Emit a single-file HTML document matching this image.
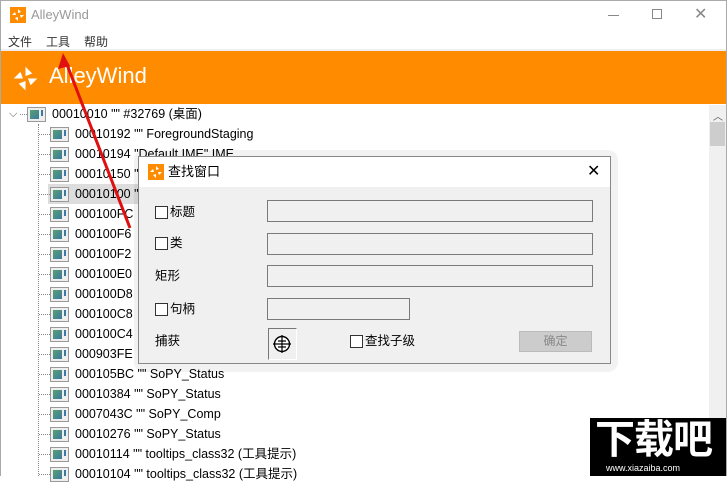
<!DOCTYPE html>
<html><head><meta charset="utf-8"><style>
*{margin:0;padding:0;box-sizing:border-box}
body{width:727px;height:476px;overflow:hidden;background:#fff;font-family:"Liberation Sans","Noto Sans CJK SC",sans-serif;font-size:12px;color:#000;position:relative}
.abs{position:absolute}
.row{position:absolute;left:0;height:20px;line-height:20px;white-space:nowrap;font-size:12.5px}
.ico{position:absolute;top:3px;width:19px;height:15px;border:1px solid #999;background:#eee;}
.ico:before{content:"";position:absolute;left:2px;top:2px;width:9px;height:9px;background:linear-gradient(135deg,#5aa070,#3a7aa0)}
.ico:after{content:"";position:absolute;right:2px;top:2px;width:2px;height:6px;background:#3a7aa0}
.hd{position:absolute;border-top:1px dotted #888;width:12px;top:10px}
.inp{position:absolute;background:#f0f0f0;border:1px solid #7a7a7a;height:22px}
.cb{position:absolute;width:13px;height:13px;border:1px solid #333;background:#fff}
.lbl{position:absolute;font-size:12.5px;line-height:14px}
</style></head><body>
<div class="abs" style="left:0;top:0;width:727px;height:476px;border:1px solid #aaa;border-bottom:none;pointer-events:none;z-index:9"></div>
<div class="abs" style="left:10px;top:7px;width:16px;height:16px;background:#ff8c00"></div>
<svg class="abs" style="left:10px;top:7px" width="16" height="16" viewBox="0 0 16 16"><path d="M8 2l3 3-3 1zM14 8l-3 3-1-3zM8 14l-3-3 3-1zM2 8l3-3 1 3z" fill="#fff"/></svg>
<div class="abs" style="left:31px;top:7px;font-size:13px;color:#999">AlleyWind</div>
<div class="abs" style="left:608px;top:15px;width:11px;height:1px;background:#888"></div>
<div class="abs" style="left:652px;top:9px;width:10px;height:10px;border:1px solid #888"></div>
<div class="abs" style="left:694px;top:4px;font-size:16px;color:#888">✕</div>
<div class="abs" style="left:8px;top:33px;font-size:12px;color:#333">文件</div>
<div class="abs" style="left:46px;top:33px;font-size:12px;color:#333">工具</div>
<div class="abs" style="left:84px;top:33px;font-size:12px;color:#333">帮助</div>
<div class="abs" style="left:0;top:49px;width:727px;height:2px;background:#eee"></div>
<div class="abs" style="left:0;top:51px;width:727px;height:53px;background:#ff8c00"></div>
<svg class="abs" style="left:12px;top:65px" width="27" height="27" viewBox="0 0 16 16"><path d="M8 1l4 4-4 1.5zM15 8l-4 4-1.5-4zM8 15l-4-4 4-1.5zM1 8l4-4 1.5 4z" fill="#fff"/></svg>
<div class="abs" style="left:49px;top:63px;font-size:22px;color:#fff">AlleyWind</div>
<div class="abs" style="left:709px;top:105px;width:17px;height:371px;background:#f0f0f0"></div>
<div class="abs" style="left:713px;top:108px;font-size:10px;color:#555">︿</div>
<div class="abs" style="left:710px;top:122px;width:15px;height:24px;background:#cdcdcd"></div>
<div class="abs" style="left:38px;top:124px;height:352px;border-left:1px dotted #888"></div>
<div class="row" style="top:104px;width:700px">
<span class="abs" style="left:9px;top:0;font-size:11px;color:#555">⌵</span>
<div class="hd" style="left:20px;width:7px"></div>
<div class="ico" style="left:27px"></div><span class="abs" style="left:52px">00010010 "" #32769 (桌面)</span></div>
<div id="rows"></div>
<script>
var t=['00010192 "" ForegroundStaging','00010194 "Default IME" IME','00010150 "','00010100 "','000100FC','000100F6','000100F2','000100E0','000100D8','000100C8','000100C4','000903FE','000105BC "" SoPY_Status','00010384 "" SoPY_Status','0007043C "" SoPY_Comp','00010276 "" SoPY_Status','00010114 "" tooltips_class32 (工具提示)','00010104 "" tooltips_class32 (工具提示)'];
var h='';for(var i=0;i<t.length;i++){var y=124+20*i;h+='<div class="row" style="top:'+y+'px;width:660px">'+(i==3?'<div class="abs" style="left:48px;top:0;width:120px;height:20px;background:#ddd"></div>':'')+'<div class="hd" style="left:39px;width:11px"></div><div class="ico" style="left:50px"></div><span class="abs" style="left:75px">'+t[i]+'</span></div>';}
document.getElementById('rows').innerHTML=h;
</script>
<svg class="abs" style="left:0;top:0;z-index:3" width="727" height="476"><line x1="66" y1="62" x2="130" y2="228" stroke="#e01010" stroke-width="3"/><path d="M63 53l-5 16 12-3z" fill="#e01010"/></svg>
<div class="abs" style="left:134px;top:150px;width:484px;height:222px;background:rgba(0,0,0,0.05);border-radius:10px;z-index:4"></div>
<div class="abs" style="left:138px;top:156px;width:473px;height:208px;background:#f0f0f0;border:1px solid #888;z-index:5">
<div class="abs" style="left:0;top:0;width:471px;height:30px;background:#fff"></div>
<div class="abs" style="left:9px;top:7px;width:16px;height:16px;background:#ff8c00"></div>
<svg class="abs" style="left:9px;top:7px" width="16" height="16" viewBox="0 0 16 16"><path d="M8 2l3 3-3 1zM14 8l-3 3-1-3zM8 14l-3-3 3-1zM2 8l3-3 1 3z" fill="#fff"/></svg>
<div class="abs" style="left:29px;top:7px;font-size:13px;line-height:16px">查找窗口</div>
<div class="abs" style="left:448px;top:4px;font-size:16px">✕</div>
<div class="cb" style="left:16px;top:49px"></div><div class="lbl" style="left:31px;top:48px">标题</div>
<div class="inp" style="left:128px;top:43px;width:326px"></div>
<div class="cb" style="left:16px;top:80px"></div><div class="lbl" style="left:31px;top:79px">类</div>
<div class="inp" style="left:128px;top:76px;width:326px"></div>
<div class="lbl" style="left:16px;top:112px">矩形</div>
<div class="inp" style="left:128px;top:108px;width:326px"></div>
<div class="cb" style="left:16px;top:146px"></div><div class="lbl" style="left:31px;top:145px">句柄</div>
<div class="inp" style="left:128px;top:141px;width:143px"></div>
<div class="lbl" style="left:16px;top:177px">捕获</div>
<div class="abs" style="left:129px;top:171px;width:29px;height:32px;border:1px solid #fff;border-top-color:#777;border-left-color:#777;background:#f0f0f0"></div>
<svg class="abs" style="left:133px;top:177px" width="20" height="20" viewBox="0 0 20 20"><circle cx="10" cy="10" r="7.5" fill="#fff" stroke="#000" stroke-width="1.4"/><path d="M10 1v18M1 10h18M6 7h8M6 13h8" stroke="#000" stroke-width="1.2"/></svg>
<div class="cb" style="left:211px;top:178px"></div><div class="lbl" style="left:226px;top:177px">查找子级</div>
<div class="abs" style="left:380px;top:174px;width:73px;height:21px;background:#ccc;border:1px solid #bbb;color:#888;text-align:center;line-height:19px;font-size:12px">确定</div>
</div>
<div class="abs" style="left:590px;top:418px;width:137px;height:58px;background:#000;z-index:6"></div>
<div class="abs" style="left:595px;top:418px;font-size:40px;line-height:44px;font-weight:bold;color:#fff;z-index:7;letter-spacing:-1px">下载吧</div>
<div class="abs" style="left:606px;top:463px;font-size:9px;line-height:10px;color:#fff;z-index:7">www.xiazaiba.com</div>
</body></html>
